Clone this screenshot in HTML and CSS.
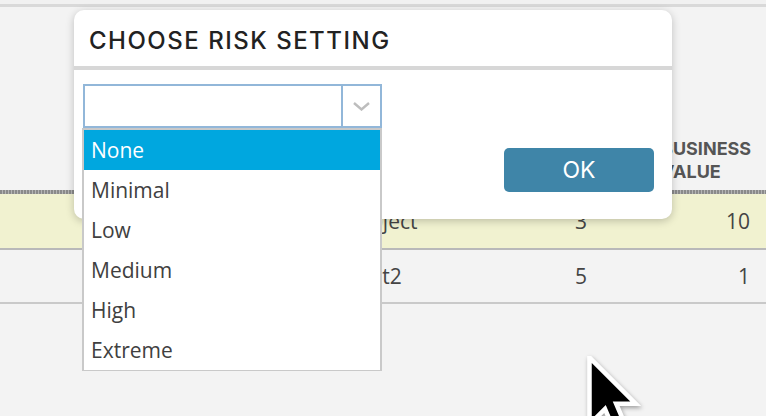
FILE: index.html
```html
<!DOCTYPE html>
<html>
<head>
<meta charset="utf-8">
<link rel="stylesheet" href="styles.css">
</head>
<body>
<div class="page">
  <div class="topbar"></div>
  <div class="grid head">
    <div class="cell"></div>
    <div class="cell"></div>
    <div class="cell"></div>
    <div class="cell h val">BUSINESS<br>VALUE</div>
  </div>
  <div class="dots"></div>
  <div class="grid row hl">
    <div class="cell"></div>
    <div class="cell name">Project</div>
    <div class="cell num">3</div>
    <div class="cell right">10</div>
  </div>
  <div class="grid row">
    <div class="cell"></div>
    <div class="cell name">Test2</div>
    <div class="cell num">5</div>
    <div class="cell right">1</div>
  </div>

  <div class="dialog">
    <div class="dlg-head">CHOOSE RISK SETTING</div>
    <div class="dlg-body">
      <div class="select-wrap">
        <div class="select">
          <div class="select-value"></div>
          <div class="select-btn">
            <svg width="17" height="9" viewBox="0 0 17 9"><path d="M1 1 L8.5 7.5 L16 1" fill="none" stroke="#bdbdbd" stroke-width="2.4"/></svg>
          </div>
        </div>
        <ul class="list">
          <li class="opt sel">None</li>
          <li class="opt">Minimal</li>
          <li class="opt">Low</li>
          <li class="opt">Medium</li>
          <li class="opt">High</li>
          <li class="opt">Extreme</li>
        </ul>
      </div>
      <button class="ok">OK</button>
    </div>
  </div>

  <svg class="cursor" width="60" height="70" viewBox="-2 -2 15 20">
    <path d="M0 0 L0 16 L4 12 L7 19 L9 18 L6 11 L11 11 Z" fill="#fff" stroke="#fff" stroke-width="2.6" stroke-linejoin="miter"/>
    <path d="M0 0 L0 16 L4 12 L7 19 L9 18 L6 11 L11 11 Z" fill="#000"/>
  </svg>
</div>
</body>
</html>
```

FILE: styles.css
```css
html, body {
  margin: 0;
  padding: 0;
}
body {
  background: #f3f3f3;
  font-family: "Open Sans", "Noto Sans", sans-serif;
}
.page {
  position: relative;
  width: 766px;
  height: 416px;
  overflow: hidden;
  background: #f3f3f3;
}
.topbar {
  height: 4px;
  border-bottom: 3px solid #d9d9d9;
  background: #f1f1f1;
}
.grid {
  display: grid;
  grid-template-columns: 349px 180px 104px 133px;
}
.head {
  height: 183px;
  align-items: end;
}
.head .cell {
  padding-bottom: 7px;
}
.h {
  font-family: Inter, sans-serif;
  font-weight: 700;
  font-size: 18px;
  line-height: 23px;
  color: #555;
}
.h.val {
  padding-left: 28px;
}
.dots {
  height: 4px;
  background: repeating-linear-gradient(90deg, #8a8a8a 0 2px, #b4b4b4 2px 3px);
}
.row {
  height: 54px;
  align-items: center;
  border-bottom: 2px solid #b9b9b9;
  font-size: 21px;
  color: #444;
}
.row + .row {
  height: 52px;
  border-bottom-color: #c9c9c9;
}
.hl {
  background: #f1f2d0;
}
.cell.num {
  text-align: center;
}
.cell.right {
  text-align: right;
  padding-right: 16px;
}

.dialog {
  position: absolute;
  left: 74px;
  top: 10px;
  width: 598px;
  background: #fff;
  border-radius: 10px;
  box-shadow: 0 2px 8px rgba(0, 0, 0, 0.22);
}
.dlg-head {
  height: 60px;
  box-sizing: border-box;
  padding: 17px 0 0 15px;
  border-bottom: 4px solid #d7d7d7;
  font-family: Inter, sans-serif;
  font-weight: 500;
  font-size: 24px;
  line-height: 27px;
  letter-spacing: 1.5px;
  color: #222;
}
.dlg-body {
  display: flex;
  justify-content: space-between;
  align-items: flex-start;
  padding: 14px 18px 27px 9px;
}
.select-wrap {
  position: relative;
  width: 299px;
}
.select {
  display: flex;
  height: 44px;
  box-sizing: border-box;
  border: 2px solid #92b7d9;
  background: #fff;
}
.select-value {
  flex: 1;
}
.select-btn {
  width: 37px;
  border-left: 2px solid #92b7d9;
  display: flex;
  align-items: center;
  justify-content: center;
}
.list {
  position: absolute;
  left: -1px;
  top: 44px;
  width: 300px;
  box-sizing: border-box;
  margin: 0;
  padding: 0;
  list-style: none;
  background: #fff;
  border: 2px solid #c9c9c9;
  border-bottom-width: 1px;
  z-index: 2;
}
.opt {
  height: 40px;
  line-height: 40px;
  padding-left: 7px;
  font-size: 21px;
  color: #404040;
}
.opt.sel {
  background: #00a7df;
  color: #fff;
}
.ok {
  margin-top: 64px;
  width: 150px;
  height: 44px;
  border: 0;
  border-radius: 5px;
  background: #3f85a8;
  color: #fff;
  font-family: Inter, sans-serif;
  font-weight: 400;
  font-size: 23px;
  padding: 0;
}
.cursor {
  position: absolute;
  left: 581px;
  top: 356px;
  filter: drop-shadow(1px 2px 2px rgba(0, 0, 0, 0.35));
}
```
